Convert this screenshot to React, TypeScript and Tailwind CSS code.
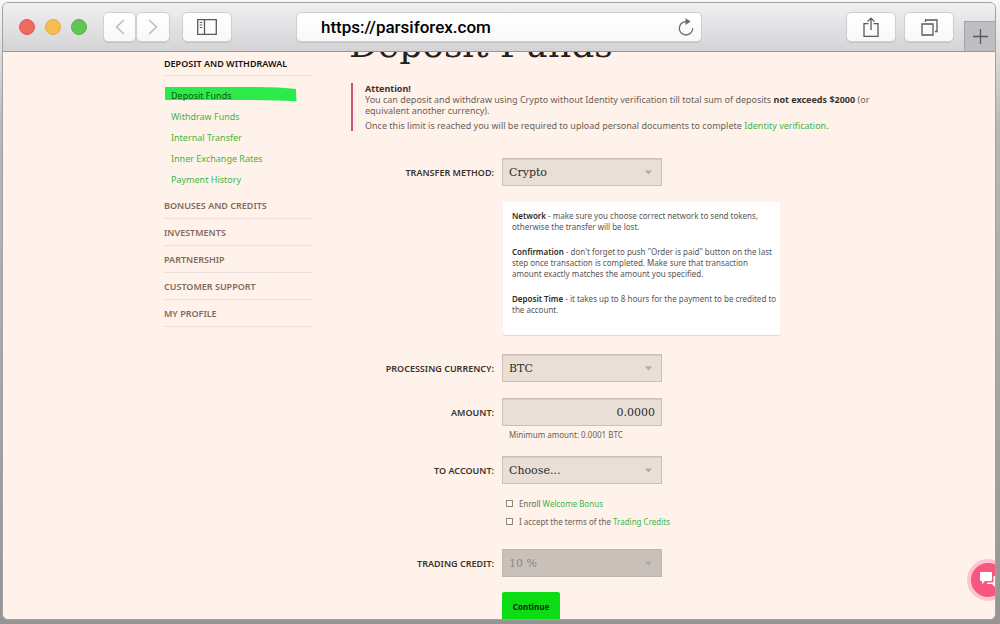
import type { ReactNode } from 'react'

const depositLinks = ['Withdraw Funds', 'Internal Transfer', 'Inner Exchange Rates', 'Payment History']

const sections = ['Bonuses and Credits', 'Investments', 'Partnership', 'Customer Support', 'My Profile']

const toolbarButton =
  'flex h-[30px] items-center justify-center rounded-[5px] border border-[#cfced0] bg-linear-to-b from-white to-[#f8f8f8] shadow-[0_1px_0_#c4c3c5]'

const field =
  "h-7 w-full appearance-none rounded-none border border-[#cdbfb7] bg-[#e9dfd7] px-1.5 font-['DejaVu_Serif',serif] text-[11px] text-[#2f2a26] shadow-[inset_0_1px_0_#d8ccc4] outline-none disabled:border-[#bfb6b0] disabled:bg-[#c8c0b9] disabled:text-[#8d8782] disabled:opacity-100 disabled:shadow-none"

function BrowserBar() {
  return (
    <header className="relative flex h-[49px] shrink-0 items-center border-b border-[#98979a] bg-linear-to-b from-[#f0eff1] to-[#d4d3d6] pl-4">
      <div className="flex items-center gap-2.5">
        <span className="size-4 rounded-full border border-[#dd5a50] bg-[#ee6a5e]" />
        <span className="size-4 rounded-full border border-[#e5ab40] bg-[#f6be50]" />
        <span className="size-4 rounded-full border border-[#55b247] bg-[#62c655]" />
      </div>

      <div className="ml-4 flex">
        <button type="button" aria-label="Back" className={`${toolbarButton} w-[33px]`}>
          <svg width="10" height="16" viewBox="0 0 10 16" fill="none" stroke="#bdbcbe" strokeWidth="1.6">
            <path d="M9 1 1.5 8 9 15" />
          </svg>
        </button>
        <button type="button" aria-label="Forward" className={`${toolbarButton} w-[34px]`}>
          <svg width="10" height="16" viewBox="0 0 10 16" fill="none" stroke="#bdbcbe" strokeWidth="1.6">
            <path d="m1 1 7.500 7L1 15" />
          </svg>
        </button>
      </div>

      <button type="button" aria-label="Sidebar" className={`${toolbarButton} ml-3 w-[50px]`}>
        <svg width="20" height="16" viewBox="0 0 20 16" fill="none" stroke="#59585a" strokeWidth="1.3">
          <path d="M.7.7h18.6v14.6H.7zM7.500.7v14.6" />
          <path d="M2.7 3.5h2.500M2.7 6h2.500M2.7 8.5h2.500" strokeWidth="1" />
        </svg>
      </button>

      <div className="relative ml-16 mr-36 min-w-0 flex-1">
        <input
          type="text"
          aria-label="Address"
          defaultValue="https://parsiforex.com"
          className="h-[30px] w-full rounded-[5px] border border-[#cfced0] bg-linear-to-b from-white to-[#f8f8f8] pl-6 pr-9 font-[Roboto,sans-serif] text-[17px] font-medium text-black shadow-[0_1px_0_#c4c3c5] outline-none"
        />
        <button type="button" aria-label="Reload" className="absolute inset-y-0 right-2 flex items-center">
          <svg width="16" height="18" viewBox="0 0 16 18" fill="none">
            <path d="M8 3.6a6.7 6.7 0 1 0 6.7 6.7" stroke="#6b6a6c" strokeWidth="1.3" />
            <path d="M7.5.2 12.6 3.6 7.5 7z" fill="#6b6a6c" />
          </svg>
        </button>
      </div>

      <div className="mr-[41px] flex gap-2">
        <button type="button" aria-label="Share" className={`${toolbarButton} w-[50px]`}>
          <svg width="16" height="20" viewBox="0 0 16 20" fill="none" stroke="#59585a" strokeWidth="1.3">
            <path d="M5.500 6.7H1v12.6h14V6.7h-4.500M8 13V1.200M4.500 4.600 8 1.100l3.500 3.500" />
          </svg>
        </button>
        <button type="button" aria-label="Show tabs" className={`${toolbarButton} w-[50px]`}>
          <svg width="17" height="17" viewBox="0 0 17 17" fill="none" stroke="#59585a" strokeWidth="1.3">
            <path d="M1 5h11v11H1zM4.500 3V1H16v11.500h-2" />
          </svg>
        </button>
      </div>

      <button
        type="button"
        aria-label="New tab"
        className="absolute bottom-0 right-0 flex h-[30px] w-[31px] items-center justify-center border-l border-t border-[#a3a2a5] bg-[#bebdc0]"
      >
        <svg width="15" height="15" viewBox="0 0 15 15" stroke="#59585a" strokeWidth="1.3">
          <path d="M7.500 0v15M0 7.500h15" />
        </svg>
      </button>
    </header>
  )
}

function Sidebar() {
  return (
    <nav className="w-[149px] shrink-0 text-[9px]">
      <a href="#deposit" className="flex h-6 items-center border-b border-[#eee1db] font-semibold uppercase text-[#15110f]">
        Deposit and Withdrawal
      </a>
      <ul className="pb-0.5 pt-[9px]">
        <li className="relative flex h-[21px] items-center pl-[7px]">
          {/* marker stroke behind the current item */}
          <svg className="absolute left-px top-0.5" width="132" height="15" viewBox="0 0 132 15" fill="#2bea49" aria-hidden="true">
            <path d="M0 0h88q28 0 43 2l.5 12.500Q112 13 88 13H0z" />
          </svg>
          <a href="#funds" className="relative text-[#0d5a18]">
            Deposit Funds
          </a>
        </li>
        {depositLinks.map((label) => (
          <li key={label} className="flex h-[21px] items-center pl-[7px]">
            <a href="#funds" className="text-[#41b548]">
              {label}
            </a>
          </li>
        ))}
      </ul>
      {sections.map((label) => (
        <a
          key={label}
          href="#section"
          className="flex h-[27px] items-center border-b border-[#eee1db] pt-0.5 font-semibold uppercase text-[#7f6b5d]"
        >
          {label}
        </a>
      ))}
    </nav>
  )
}

function Row({ id, label, children }: { id: string; label: string; children: ReactNode }) {
  return (
    <div className="flex items-center gap-2">
      <label htmlFor={id} className="w-[145px] shrink-0 text-right text-[9px] font-semibold uppercase text-[#3b322c]">
        {label}
      </label>
      <div className="relative w-40">{children}</div>
    </div>
  )
}

function SelectField({ id, value, disabled = false }: { id: string; value: string; disabled?: boolean }) {
  return (
    <>
      <select id={id} disabled={disabled} className={field}>
        <option>{value}</option>
      </select>
      <svg
        className={`pointer-events-none absolute right-2.5 top-3 ${disabled ? 'text-[#aea6a0]' : 'text-[#b5a9a1]'}`}
        width="7"
        height="5"
        viewBox="0 0 7 5"
        fill="currentColor"
        aria-hidden="true"
      >
        <path d="M0 .5h7L3.500 4.500z" />
      </svg>
    </>
  )
}

function Check({ text, link }: { text: string; link: string }) {
  return (
    <label className="flex h-[18px] items-center gap-1.5">
      <input type="checkbox" className="size-[7px] appearance-none border border-[#8f8680] bg-[#fff8f4] checked:bg-[#41b548]" />
      <span>
        {text}{' '}
        <a href="#terms" className="text-[#41b548]">
          {link}
        </a>
      </span>
    </label>
  )
}

function DepositForm() {
  return (
    <form className="text-[8px] leading-[11px] text-[#6b5f57]" onSubmit={(e) => e.preventDefault()}>
      <Row id="method" label="Transfer Method:">
        <SelectField id="method" value="Crypto" />
      </Row>

      <div className="ml-[154px] mt-4 w-[277px] space-y-3.5 whitespace-nowrap rounded-[2px] bg-white px-[9px] pb-5 pt-2 text-[#5b5552] shadow-[0_1px_1px_#e0d6d2]">
        <p>
          <b className="font-semibold text-[#2d2926]">Network</b> - make sure you choose correct network to send tokens,
          <br />
          otherwise the transfer will be lost.
        </p>
        <p>
          <b className="font-semibold text-[#2d2926]">Confirmation</b> - don't forget to push "Order is paid" button on the last
          <br />
          step once transaction is completed. Make sure that transaction
          <br />
          amount exactly matches the amount you specified.
        </p>
        <p>
          <b className="font-semibold text-[#2d2926]">Deposit Time</b> - it takes up to 8 hours for the payment to be credited to
          <br />
          the account.
        </p>
      </div>

      <div className="mt-[19px]">
        <Row id="currency" label="Processing Currency:">
          <SelectField id="currency" value="BTC" />
        </Row>
      </div>

      <div className="mt-4">
        <Row id="amount" label="Amount:">
          <input id="amount" type="text" defaultValue="0.0000" className={`${field} text-right`} />
        </Row>
        <p className="ml-[160px] mt-[3px]">Minimum amount: 0.0001 BTC</p>
      </div>

      <div className="mt-4">
        <Row id="account" label="To Account:">
          <SelectField id="account" value="Choose..." />
        </Row>
      </div>

      <div className="ml-[157px] mt-2.5">
        <Check text="Enroll" link="Welcome Bonus" />
        <Check text="I accept the terms of the" link="Trading Credits" />
      </div>

      <div className="mt-[19px]">
        <Row id="credit" label="Trading Credit:">
          <SelectField id="credit" value="10 %" disabled />
        </Row>
      </div>

      <button type="submit" className="ml-[153px] mt-[15px] h-[29px] w-[58px] rounded-[2px] bg-[#0bdc14] font-bold text-[#0b2a0c]">
        Continue
      </button>
    </form>
  )
}

export default function App() {
  return (
    <div className="flex h-screen flex-col bg-linear-to-b from-[#f8f8f8] via-[#b8b8b8] via-20% to-[#949494] pb-1 pl-0.5 pr-1 pt-0.5 font-['Noto_Sans',sans-serif]">
      <div className="relative flex min-h-0 flex-1 flex-col overflow-hidden rounded-[6px] border border-[#a2a1a3] bg-[#fff2eb]">
        <BrowserBar />

        <div className="flex min-h-0 flex-1 gap-9 overflow-hidden pl-[161px] pr-24">
          <Sidebar />
          <main className="min-w-0 flex-1">
            <h1 className="-mt-[27px] mb-[18px] whitespace-nowrap font-['DejaVu_Serif',serif] text-4xl leading-10 text-[#231f1c]">
              Deposit Funds
            </h1>

            <section className="mb-[27px] ml-0.5 h-12 whitespace-nowrap border-l-2 border-[#cc5475] pl-3 text-[9px] leading-[11px] text-[#6b5f57]">
              <p>
                <b className="text-[#3b322c]">Attention!</b>
                <br />
                You can deposit and withdraw using Crypto without Identity verification till total sum of deposits{' '}
                <b className="text-[#3b322c]">not exceeds $2000</b> (or
                <br />
                equivalent another currency).
              </p>
              <p className="mt-1">
                Once this limit is reached you will be required to upload personal documents to complete{' '}
                <a href="#verify" className="text-[#41b548]">
                  Identity verification
                </a>
                .
              </p>
            </section>

            <DepositForm />
          </main>
        </div>

        <button
          type="button"
          aria-label="Open chat"
          className="absolute bottom-[18px] -right-3.5 flex size-[42px] items-center justify-center rounded-full border-4 border-[#fcc5cf] bg-[#f7567e]"
        >
          <svg width="18" height="16" viewBox="0 0 18 16" fill="#fff" aria-hidden="true">
            <path d="M2 0h10q1 0 1 1v7q0 1-1 1H6l-3 3V9H2Q1 9 1 8V1q0-1 1-1z" />
            <path d="M14.500 4H17q1 0 1 1v6q0 1-1 1h-1v3l-3-3H9q-1 0-1-1v-.5h5.500q1 0 1-1z" />
          </svg>
        </button>
      </div>
    </div>
  )
}
